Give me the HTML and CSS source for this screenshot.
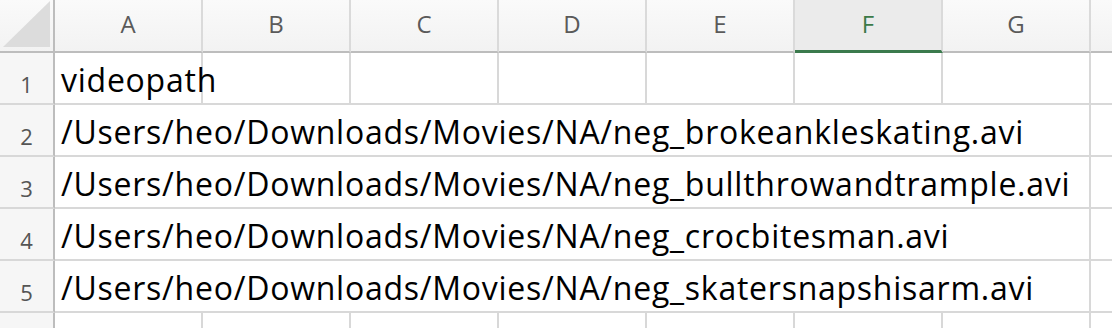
FILE: index.html
```html
<!DOCTYPE html>
<html>
<head>
<meta charset="utf-8">
<link rel="stylesheet" href="styles.css">
</head>
<body>
<div class="sheet">
  <div class="row head">
    <div class="corner"><div class="tri"></div></div>
    <div class="col">A</div>
    <div class="col">B</div>
    <div class="col">C</div>
    <div class="col">D</div>
    <div class="col">E</div>
    <div class="col sel">F</div>
    <div class="col">G</div>
    <div class="col rest"></div>
  </div>
  <div class="row">
    <div class="num">1</div>
    <div class="cell">videopath</div>
    <div class="cell"></div>
    <div class="cell"></div>
    <div class="cell"></div>
    <div class="cell"></div>
    <div class="cell"></div>
    <div class="cell"></div>
    <div class="cell rest"></div>
  </div>
  <div class="row">
    <div class="num">2</div>
    <div class="cell span">/Users/heo/Downloads/Movies/NA/neg_brokeankleskating.avi</div>
    <div class="cell rest"></div>
  </div>
  <div class="row">
    <div class="num">3</div>
    <div class="cell span">/Users/heo/Downloads/Movies/NA/neg_bullthrowandtrample.avi</div>
    <div class="cell rest"></div>
  </div>
  <div class="row">
    <div class="num">4</div>
    <div class="cell span">/Users/heo/Downloads/Movies/NA/neg_crocbitesman.avi</div>
    <div class="cell rest"></div>
  </div>
  <div class="row">
    <div class="num">5</div>
    <div class="cell span">/Users/heo/Downloads/Movies/NA/neg_skatersnapshisarm.avi</div>
    <div class="cell rest"></div>
  </div>
  <div class="row">
    <div class="num">6</div>
    <div class="cell"></div>
    <div class="cell"></div>
    <div class="cell"></div>
    <div class="cell"></div>
    <div class="cell"></div>
    <div class="cell"></div>
    <div class="cell"></div>
    <div class="cell rest"></div>
  </div>
</div>
</body>
</html>
```

FILE: styles.css
```css
html, body {
  margin: 0;
  padding: 0;
  background: #ffffff;
  overflow: hidden;
}
.sheet {
  width: 1112px;
  height: 328px;
  overflow: hidden;
  font-family: "Open Sans", "Liberation Sans", sans-serif;
}
.row {
  display: grid;
  grid-template-columns: 55px repeat(7, 148px) 1fr;
  height: 52px;
}
.head {
  height: 53px;
  background: linear-gradient(#fafafa, #f2f2f2);
}
.corner {
  border-right: 2px solid #bdbdbd;
  border-bottom: 2px solid #bdbdbd;
  position: relative;
}
.tri {
  position: absolute;
  left: 3px;
  top: 1px;
  width: 47px;
  height: 46px;
  background: #dcdcdc;
  clip-path: polygon(100% 0, 100% 100%, 0 100%);
}
.col {
  border-right: 2px solid #dadada;
  border-bottom: 2px solid #bdbdbd;
  color: #5a5a5a;
  font-size: 24px;
  display: flex;
  align-items: center;
  justify-content: center;
  padding-bottom: 4px;
}
.col.sel {
  color: #3c7a48;
  background: #ebebeb;
  border-bottom: 3px solid #3b7a4d;
}
.col.rest {
  border-right: none;
}
.num {
  background: #f6f6f6;
  border-right: 2px solid #bdbdbd;
  border-bottom: 2px solid #d8d8d8;
  color: #555555;
  font-size: 22px;
  display: flex;
  align-items: flex-end;
  justify-content: center;
  padding-bottom: 8px;
  line-height: 1;
}
.cell {
  border-right: 2px solid #d8d8d8;
  border-bottom: 2px solid #d8d8d8;
  color: #000000;
  font-size: 32px;
  letter-spacing: 0.75px;
  line-height: 1;
  display: flex;
  align-items: flex-end;
  padding: 0 0 7px 6px;
  white-space: nowrap;
}
.cell.span {
  grid-column: 2 / 9;
}
.cell.rest {
  border-right: none;
}
```
